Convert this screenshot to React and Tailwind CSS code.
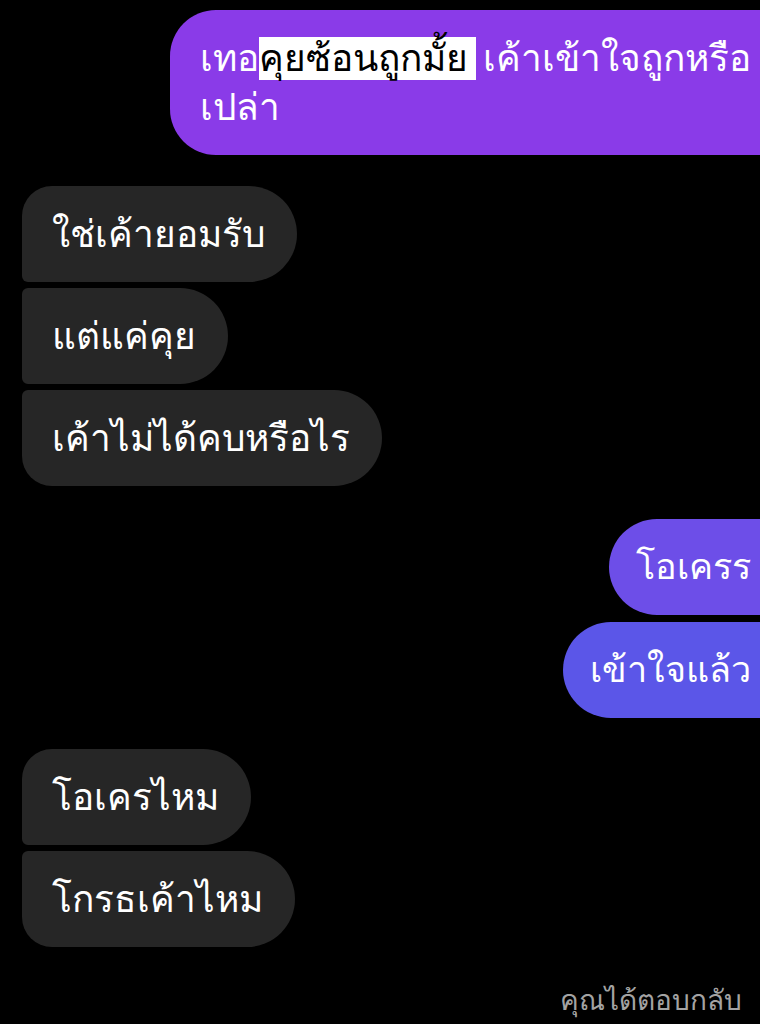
import React from "react";

const font = { fontFamily: '"DejaVu Sans Mono", monospace' };
const spaceFont = { fontFamily: '"Liberation Sans", sans-serif' };

function Left({ text, pos }) {
  const r =
    pos === "first"
      ? "rounded-tl-[30px] rounded-bl-[6px]"
      : pos === "last"
      ? "rounded-tl-[6px] rounded-bl-[30px]"
      : "rounded-tl-[6px] rounded-bl-[6px]";
  return (
    <div className="flex">
      <div className={`bg-[#262626] text-white h-[96px] flex items-center pl-[30px] pr-[32px] rounded-r-[48px] ${r} text-[37px] leading-none`}>
        {text}
      </div>
    </div>
  );
}

export default function App() {
  return (
    <div className="w-[760px] h-[1024px] bg-black overflow-hidden" style={font}>
      <div className="flex flex-col">
        <div className="flex pt-[10px]">
          <div className="flex-1 bg-[#8a3be8] text-white ml-[170px] mr-[-10px] rounded-l-[46px] pl-[30px] pt-[26px] pb-[24px] text-[37px] leading-[46px] whitespace-nowrap">
            เทอ<span className="bg-white text-black pr-[8px]">คุยซ้อนถูกมั้ย</span><span style={spaceFont} className="text-[25px]"> </span>เค้าเข้าใจถูกหรือ
            <br />
            เปล่า
          </div>
        </div>
        <div className="flex flex-col gap-[6px] mt-[31px] ml-[22px]">
          <Left text="ใช่เค้ายอมรับ" pos="first" />
          <Left text="แต่แค่คุย" pos="mid" />
          <Left text="เค้าไม่ได้คบหรือไร" pos="last" />
        </div>
        <div className="flex flex-col items-end gap-[7px] mt-[33px]">
          <div className="bg-[#6d4ee8] text-white h-[96px] flex items-center pl-[27px] pr-[19px] mr-[-10px] rounded-l-[48px] rounded-r-[8px] text-[36px] leading-none">โอเครร</div>
          <div className="bg-[#5b56e8] text-white h-[96px] flex items-center pl-[27px] pr-[19px] mr-[-10px] rounded-l-[48px] rounded-r-[8px] text-[36px] leading-none">เข้าใจแล้ว</div>
        </div>
        <div className="flex flex-col gap-[6px] mt-[31px] ml-[22px]">
          <Left text="โอเครไหม" pos="first" />
          <Left text="โกรธเค้าไหม" pos="last" />
        </div>
        <div className="flex justify-end pr-[18px] mt-[40px] text-[#a3a3a3] text-[28px] leading-none">คุณได้ตอบกลับ</div>
      </div>
    </div>
  );
}
